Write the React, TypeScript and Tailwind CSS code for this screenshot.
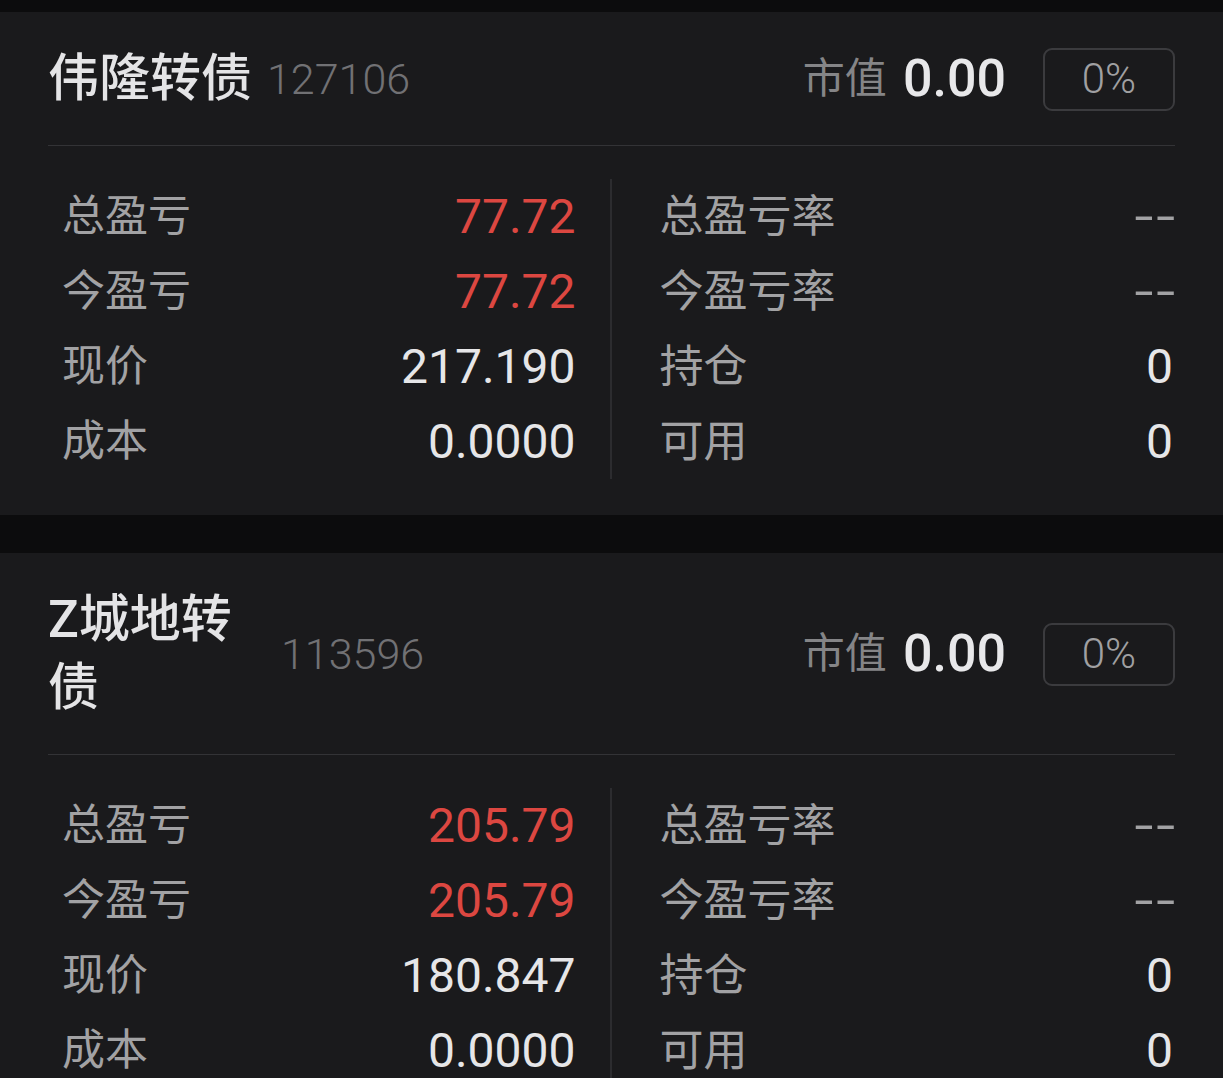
import React from "react";

type Row = { label: string; value: string; red?: boolean };

const FONT = { fontFamily: 'Roboto, "Noto Sans CJK SC", sans-serif' };

function Value({ r }: { r: Row }) {
  if (r.value === "--") {
    return (
      <span className="-mr-[5px] inline-block origin-right scale-x-[1.45] text-[47px] tracking-[2px] text-[#a2a2a4]">
        --
      </span>
    );
  }
  return (
    <span className={r.red ? "text-[48px] text-[#dc4741]" : "text-[48px] text-[#e6e6e8]"}>
      {r.value}
    </span>
  );
}

function Card({
  name,
  code,
  left,
  right,
}: {
  name: string;
  code: string;
  left: Row[];
  right: Row[];
}) {
  return (
    <div className="bg-[#1a1a1c] px-[48px] pt-[33px] pb-[36px]">
      <div className="flex items-center border-b border-[#333336] pb-[32px]">
        <div className="max-w-[218px] text-[51px] leading-[68px] font-medium text-[#e4e4e6]">
          {name}
        </div>
        <div className="ml-[15px] text-[43px] font-light text-[#717174] leading-none">
          {code}
        </div>
        <div className="ml-auto flex items-center">
          <span className="text-[42px] text-[#858587] leading-none">市值</span>
          <span className="ml-[16px] text-[52px] font-medium text-[#e8e8ea] leading-none">
            0.00
          </span>
          <div className="ml-[37px] flex h-[63px] w-[132px] items-center justify-center rounded-[9px] border-2 border-[#3b3b3e] text-[42px] font-light text-[#a0a0a2] leading-none">
            0%
          </div>
        </div>
      </div>
      <div className="mt-[33px] grid grid-cols-2">
        <div className="border-r-2 border-[#2c2c2f] pl-[14px] pr-[34px]">
          {left.map((r) => (
            <div key={r.label} className="flex h-[75px] items-center justify-between">
              <span className="text-[43px] text-[#a2a2a4]">{r.label}</span>
              <Value r={r} />
            </div>
          ))}
        </div>
        <div className="pl-[48px] pr-[2px]">
          {right.map((r) => (
            <div key={r.label} className="flex h-[75px] items-center justify-between">
              <span className="text-[44px] text-[#a2a2a4]">{r.label}</span>
              <Value r={r} />
            </div>
          ))}
        </div>
      </div>
    </div>
  );
}

export default function App() {
  return (
    <div className="h-[1078px] w-full overflow-hidden bg-[#0c0c0d]" style={FONT}>
      <div className="h-[12px]" />
      <Card
        name="伟隆转债"
        code="127106"
        left={[
          { label: "总盈亏", value: "77.72", red: true },
          { label: "今盈亏", value: "77.72", red: true },
          { label: "现价", value: "217.190" },
          { label: "成本", value: "0.0000" },
        ]}
        right={[
          { label: "总盈亏率", value: "--" },
          { label: "今盈亏率", value: "--" },
          { label: "持仓", value: "0" },
          { label: "可用", value: "0" },
        ]}
      />
      <div className="h-[38px]" />
      <Card
        name="Z城地转债"
        code="113596"
        left={[
          { label: "总盈亏", value: "205.79", red: true },
          { label: "今盈亏", value: "205.79", red: true },
          { label: "现价", value: "180.847" },
          { label: "成本", value: "0.0000" },
        ]}
        right={[
          { label: "总盈亏率", value: "--" },
          { label: "今盈亏率", value: "--" },
          { label: "持仓", value: "0" },
          { label: "可用", value: "0" },
        ]}
      />
    </div>
  );
}
